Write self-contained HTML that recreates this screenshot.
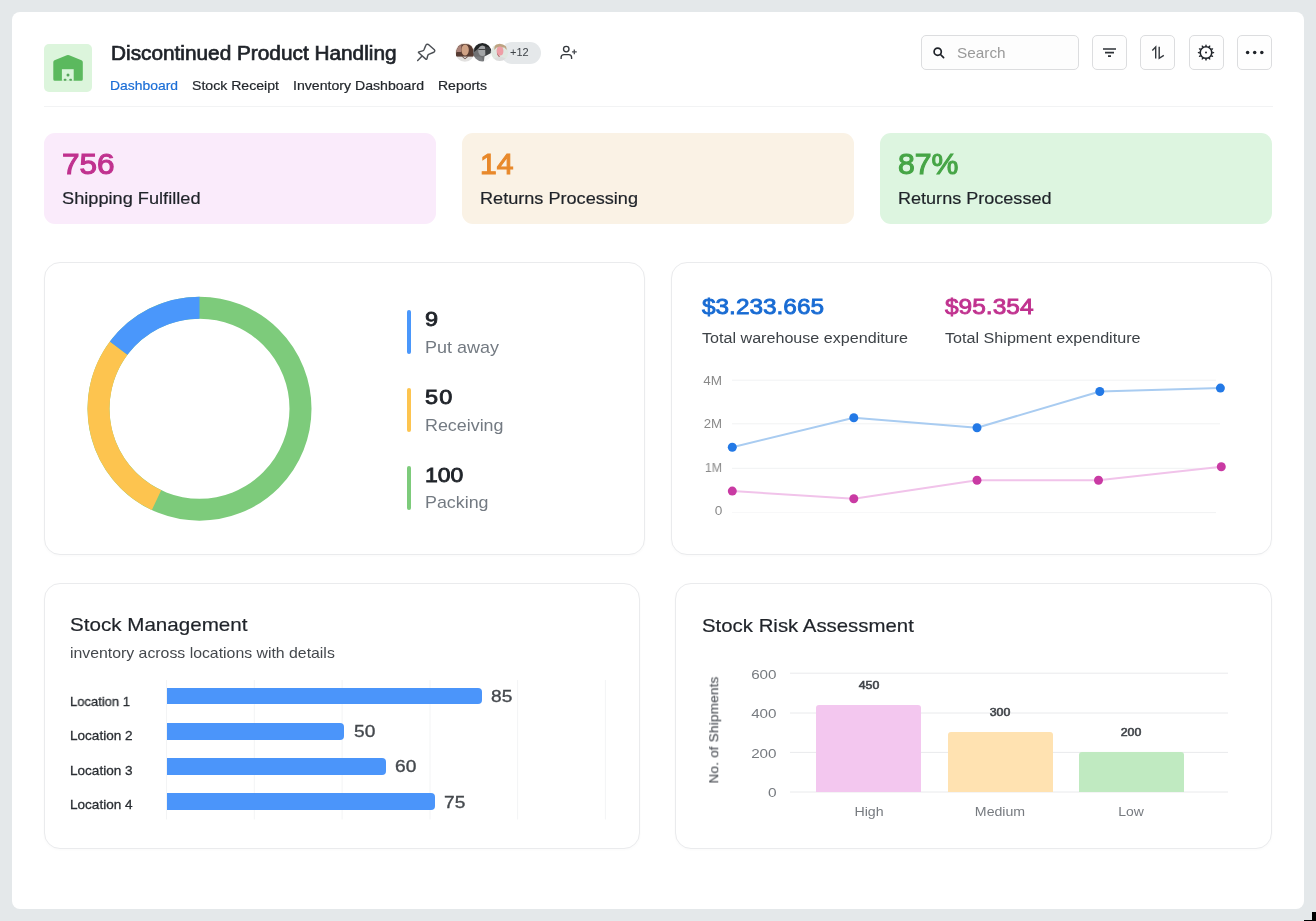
<!DOCTYPE html>
<html lang="en"><head><meta charset="utf-8"><title>Discontinued Product Handling</title>
<style>
*{box-sizing:border-box;margin:0;padding:0}
html,body{width:1316px;height:921px;overflow:hidden}
body{position:relative;background:#e4e8ea;font-family:"Liberation Sans",sans-serif;}
.abs{position:absolute}
.t{position:absolute;white-space:nowrap;line-height:1;font-family:"Liberation Sans",sans-serif;will-change:transform;}
.card{position:absolute;left:12px;top:12px;width:1292px;height:897px;background:#fff;border-radius:8px}
.hr{position:absolute;left:44px;top:105.5px;width:1228.5px;height:1px;background:#f2f3f4}
.logo{position:absolute;left:44px;top:44px;width:48px;height:48px;border-radius:5px;background:#dcf5dc}
.kpi{position:absolute;top:133px;width:392px;height:90.6px;border-radius:11px}
.panel{position:absolute;border:1px solid #eaebed;border-radius:16px;background:#fff;box-shadow:0 1px 3px rgba(0,0,0,0.025)}
.btn{position:absolute;top:35px;width:35px;height:35px;border:1px solid #dcdddf;border-radius:5px;background:#fefefe}
.search{position:absolute;left:921px;top:35px;width:158px;height:35px;border:1px solid #dcdddf;border-radius:5px;background:#fdfdfd}
.lg{position:absolute;left:407.2px;width:4px;height:44px;border-radius:2px}
.hb{position:absolute;left:166.5px;height:16.9px;background:#4b95fa;border-radius:0 4px 4px 0}
.vb{position:absolute;border-radius:3px 3px 0 0}
svg{position:absolute;overflow:visible}

</style></head><body>
<div class="card"></div>
<div class="abs" style="left:1312px;top:912px;width:4px;height:9px;background:#000"></div>
<div class="abs" style="left:1304px;top:920px;width:12px;height:1px;background:#000"></div>

<!-- header -->
<div class="logo"></div>
<svg style="left:44px;top:44px" width="48" height="48" viewBox="0 0 48 48">
  <path d="M9.3 18.2 Q9.3 16.8 10.5 16.2 L22.8 11.3 Q24 10.8 25.2 11.3 L37.5 16.2 Q38.8 16.8 38.8 18.2 L38.8 35.2 Q38.8 36.7 37.3 36.7 L10.8 36.7 Q9.3 36.7 9.3 35.2 Z" fill="#5bb95e"/>
  <rect x="17.9" y="25.2" width="11.8" height="11.6" fill="#d9f5da"/>
  <circle cx="24" cy="31.1" r="1.5" fill="#58a65c"/>
  <rect x="19.9" y="34.7" width="2.4" height="2.1" rx="0.6" fill="#58a65c"/>
  <rect x="25.5" y="34.7" width="2.4" height="2.1" rx="0.6" fill="#58a65c"/>
</svg>

<!-- search & buttons -->
<div class="search"></div>
<div class="btn" style="left:1092px"></div>
<div class="btn" style="left:1140.2px"></div>
<div class="btn" style="left:1188.8px"></div>
<div class="btn" style="left:1236.6px"></div>

<svg style="left:0;top:0" width="1316" height="110" viewBox="0 0 1316 110">
  <!-- pin -->
  <g fill="none" stroke="#4b4f54" stroke-width="1.45" stroke-linejoin="round" stroke-linecap="round">
    <path d="M426.5 44.5 Q427.6 43.9 428.7 44.7 L434.4 49.7 Q435.2 50.7 434.4 51.7 Q433.9 52.2 433.2 52.5 L428.7 54.4 Q427.8 54.9 427.6 56 L427 58.6 Q426.7 59.8 425.8 59.1 L418.7 52.8 Q418.1 52.2 419 51.9 L422.6 50.9 Q423.6 50.6 424.1 49.5 L425.7 45.6 Q426 44.8 426.5 44.5 Z"/>
    <path d="M421.6 56.5 L417.7 60.6"/>
  </g>
  <!-- add user -->
  <g fill="none" stroke="#34383d" stroke-width="1.35" stroke-linecap="butt">
    <circle cx="566.25" cy="49.1" r="2.75"/>
    <path d="M561.1 59 V57.4 Q561.1 54.55 564 54.55 H568.7 Q571.6 54.55 571.6 57.4 V59"/>
    <path d="M574.3 49.4 V54.3 M571.95 51.85 H576.75" stroke="#4b4f54"/>
  </g>
  <!-- search icon -->
  <g fill="none" stroke="#1f2329" stroke-width="1.7" stroke-linecap="round">
    <circle cx="937.7" cy="51.7" r="3.6"/><path d="M940.5 54.5 L943.6 57.6"/>
  </g>
  <!-- filter -->
  <g fill="none" stroke="#2e3237" stroke-width="1.7">
    <path d="M1103 49 H1116 M1105 52.6 H1114 M1108 56.2 H1111"/>
  </g>
  <!-- sort -->
  <g fill="none" stroke="#33373c" stroke-width="1.4" stroke-linejoin="miter">
    <path d="M1152.3 50.4 L1155.7 47 V58.5"/>
    <path d="M1159.2 46.8 V58.3 L1163.8 55.4"/>
  </g>
  <!-- gear -->
  <circle cx="1206.0" cy="52.6" r="5.75" fill="none" stroke="#1f2329" stroke-width="1.5"/>
  <path d="M1204.96 46.39 L1205.66 44.41 L1206.34 44.41 L1207.04 46.39 Z M1208.21 46.70 L1209.80 45.33 L1210.39 45.67 L1210.01 47.74 Z M1210.86 48.59 L1212.93 48.21 L1213.27 48.80 L1211.90 50.39 Z M1212.21 51.56 L1214.19 52.26 L1214.19 52.94 L1212.21 53.64 Z M1211.90 54.81 L1213.27 56.40 L1212.93 56.99 L1210.86 56.61 Z M1210.01 57.46 L1210.39 59.53 L1209.80 59.87 L1208.21 58.50 Z M1207.04 58.81 L1206.34 60.79 L1205.66 60.79 L1204.96 58.81 Z M1203.79 58.50 L1202.20 59.87 L1201.61 59.53 L1201.99 57.46 Z M1201.14 56.61 L1199.07 56.99 L1198.73 56.40 L1200.10 54.81 Z M1199.79 53.64 L1197.81 52.94 L1197.81 52.26 L1199.79 51.56 Z M1200.10 50.39 L1198.73 48.80 L1199.07 48.21 L1201.14 48.59 Z M1201.99 47.74 L1201.61 45.67 L1202.20 45.33 L1203.79 46.70 Z" fill="#1f2329"/>
  <circle cx="1206.0" cy="52.6" r="1" fill="#1f2329"/>
  <!-- dots -->
  <g fill="#1f2329"><circle cx="1247.6" cy="52.6" r="1.75"/><circle cx="1254.7" cy="52.6" r="1.75"/><circle cx="1261.8" cy="52.6" r="1.75"/></g>
</svg>

<!-- avatars -->
<div class="abs" style="left:501px;top:42px;width:39.5px;height:21.5px;border-radius:11px;background:#e5e8ea"></div>
<svg style="left:455px;top:42px" width="54" height="21" viewBox="455 42 54 21">
  <defs>
    <clipPath id="c1"><circle cx="464.9" cy="52.2" r="9.5"/></clipPath>
    <clipPath id="c2"><circle cx="482.3" cy="52.3" r="9.2"/></clipPath>
    <clipPath id="c3"><circle cx="499.7" cy="52.3" r="8.6"/></clipPath>
    <filter id="bl" x="-10%" y="-10%" width="120%" height="120%"><feGaussianBlur stdDeviation="0.45"/></filter>
  </defs>
  <g clip-path="url(#c1)"><g filter="url(#bl)">
    <rect x="454" y="41" width="22" height="23" fill="#eee3da"/>
    <path d="M456 60 Q455 47 461 44.6 Q465 43.4 469 44.6 Q475 47 474 60 Z" fill="#573a30"/>
    <path d="M456.5 52 Q457 46 461.5 44.8 L461 52 Z" fill="#a98178"/>
    <rect x="454" y="56.6" width="22" height="8" fill="#e2e1e0"/>
    <ellipse cx="465.1" cy="50" rx="3.7" ry="5.5" fill="#cfa285"/>
    <path d="M461.8 55.8 L465 58.2 L468.3 55.8 L468.2 56.8 L465 59.3 L461.9 56.8 Z" fill="#6b5248"/>
  </g></g>
  <g clip-path="url(#c2)"><g filter="url(#bl)">
    <rect x="472" y="41" width="21" height="23" fill="#6f7173"/>
    <path d="M474 52 Q474 43 482.5 43 Q491 43 491.5 52 L488 47.5 L479 48 Z" fill="#242527"/>
    <ellipse cx="482.4" cy="50.8" rx="4.2" ry="5.2" fill="#a2a4a6"/>
    <path d="M485 46.5 L490.5 48 L490 55.5 L485.5 56.5 Z" fill="#3d3f42"/>
    <path d="M478.5 49.5 H486" stroke="#444" stroke-width="1"/>
    <path d="M474 58 Q478 55.5 482 57.5 L483.5 63 L474 63 Z" fill="#7d7f82"/>
    <path d="M484.5 56.5 L492 52.5 L492 64 L483.5 64 Z" fill="#f4f4f4"/>
  </g></g>
  <g clip-path="url(#c3)"><g filter="url(#bl)">
    <rect x="490" y="41" width="20" height="23" fill="#e0e7e0"/>
    <path d="M494.3 50 Q494 42.8 500.5 42.8 Q507 43 506.6 50 L504.5 47.6 L496.6 47.6 Z" fill="#bda382"/>
    <ellipse cx="500" cy="51" rx="3.4" ry="4.6" fill="#ee9ea6"/>
    <path d="M497.2 52.5 Q498 56 500.2 56.6 L499 57 Q496.8 55.5 497.2 52.5 Z" fill="#a8575c"/>
    <path d="M492.5 64 Q493 56.8 500 56.8 Q507 56.8 507.5 64 Z" fill="#dcdcdb"/>
  </g></g>
</svg>

<div class="hr"></div>

<!-- KPI -->
<div class="kpi" style="left:44px;background:#faebfb"></div>
<div class="kpi" style="left:462px;background:#faf2e5"></div>
<div class="kpi" style="left:880px;background:#ddf5e0"></div>

<!-- panels -->
<div class="panel" style="left:44.2px;top:262px;width:600.8px;height:293.4px"></div>
<div class="panel" style="left:670.9px;top:262px;width:601px;height:293.4px"></div>
<div class="panel" style="left:44.2px;top:582.8px;width:595.4px;height:266.6px"></div>
<div class="panel" style="left:675.3px;top:582.8px;width:596.6px;height:266.6px"></div>

<!-- donut -->
<svg style="left:0;top:0" width="1316" height="921" viewBox="0 0 1316 921">
  <g fill="none" stroke-width="22" transform="translate(199.5 408.7)">
    <circle r="101" stroke="#7dcb7b"/>
    <path stroke="#fdc44f" d="M-43.00 91.39 A101 101 0 0 1 -80.87 -60.50"/>
    <path stroke="#4a97fb" d="M-80.87 -60.50 A101 101 0 0 1 0 -101"/>
  </g>
</svg>
<div class="lg" style="top:310px;background:#4a97fb"></div>
<div class="lg" style="top:388px;background:#fdc44f"></div>
<div class="lg" style="top:466px;background:#7dcb7b"></div>

<!-- line chart -->
<svg style="left:0;top:0" width="1316" height="921" viewBox="0 0 1316 921">
  <g stroke="#f1f2f3" stroke-width="1">
    <path d="M732 380.2 H1216 M732 423.8 H1220 M732 468.3 H1216 M900 512.6 H1216"/>
    <path d="M732 512.6 H900" stroke="#f8f8f9"/>
  </g>
  <polyline fill="none" stroke="#a9ccf1" stroke-width="2" stroke-linejoin="round" points="732.3,447.2 853.8,417.7 977,427.7 1099.8,391.5 1220.4,388.1"/>
  <polyline fill="none" stroke="#f1c3ea" stroke-width="2" stroke-linejoin="round" points="732.3,491.1 853.8,498.7 977,480.2 1098.5,480.2 1221.3,466.8"/>
  <g fill="#2379e6">
    <circle cx="732.3" cy="447.2" r="4.5"/><circle cx="853.8" cy="417.7" r="4.5"/><circle cx="977" cy="427.7" r="4.5"/><circle cx="1099.8" cy="391.5" r="4.5"/><circle cx="1220.4" cy="388.1" r="4.5"/>
  </g>
  <g fill="#c93aa3">
    <circle cx="732.3" cy="491.1" r="4.5"/><circle cx="853.8" cy="498.7" r="4.5"/><circle cx="977" cy="480.2" r="4.5"/><circle cx="1098.5" cy="480.2" r="4.5"/><circle cx="1221.3" cy="466.8" r="4.5"/>
  </g>
</svg>

<!-- stock management bars -->
<svg style="left:0;top:0" width="1316" height="921" viewBox="0 0 1316 921">
  <path stroke="#f3f4f5" stroke-width="1" d="M166.5 680 V819.5 M254.3 680 V819.5 M342.1 680 V819.5 M430 680 V819.5 M517.6 680 V819.5 M605.4 680 V819.5"/>
</svg>
<div class="hb" style="top:687.6px;width:315.8px"></div>
<div class="hb" style="top:722.8px;width:177.4px"></div>
<div class="hb" style="top:758px;width:219.6px"></div>
<div class="hb" style="top:793px;width:268.6px"></div>

<!-- risk chart -->
<svg style="left:0;top:0" width="1316" height="921" viewBox="0 0 1316 921">
  <path stroke="#e9eaec" stroke-width="1" d="M790 673.2 H1228 M790 713 H1228 M790 752.4 H1228 M790 792 H1228"/>
</svg>
<div class="vb" style="left:816px;top:705px;width:105px;height:87px;background:#f3c7ef"></div>
<div class="vb" style="left:948px;top:732.2px;width:104.5px;height:59.8px;background:#ffe2b1"></div>
<div class="vb" style="left:1079px;top:751.9px;width:105px;height:40.1px;background:#c0eac1"></div>
<div class="t" style="left:713.6px;top:730.2px;font-size:13.5px;color:#4d5157;-webkit-text-stroke:0.15px #4d5157;transform:translate(-50%,-50%) rotate(-90deg);letter-spacing:0.22px">No. of Shipments</div>

<div class="t" id="t0" style="top:43.27px;font-size:20px;font-weight:400;color:#1f2329;left:110.50px;transform-origin:0 50%;transform:scaleX(1.0397);-webkit-text-stroke:0.7px #1f2329;">Discontinued Product Handling</div>
<div class="t" id="t1" style="top:79.04px;font-size:13.3px;font-weight:400;color:#1a6dd6;left:110.00px;transform-origin:0 50%;transform:scaleX(1.0451);-webkit-text-stroke:0.2px #1a6dd6;">Dashboard</div>
<div class="t" id="t2" style="top:79.04px;font-size:13.3px;font-weight:400;color:#23272c;left:192.00px;transform-origin:0 50%;transform:scaleX(1.0604);-webkit-text-stroke:0.2px #23272c;">Stock Receipt</div>
<div class="t" id="t3" style="top:79.04px;font-size:13.3px;font-weight:400;color:#23272c;left:293.00px;transform-origin:0 50%;transform:scaleX(1.0611);-webkit-text-stroke:0.2px #23272c;">Inventory Dashboard</div>
<div class="t" id="t4" style="top:79.04px;font-size:13.3px;font-weight:400;color:#23272c;left:438.00px;transform-origin:0 50%;transform:scaleX(1.0523);-webkit-text-stroke:0.2px #23272c;">Reports</div>
<div class="t" id="t5" style="top:46.69px;font-size:11px;font-weight:400;color:#3d4247;left:510.40px;transform-origin:0 50%;transform:scaleX(0.9854);">+12</div>
<div class="t" id="t6" style="top:45.00px;font-size:15px;font-weight:400;color:#9a9a9a;left:956.60px;transform-origin:0 50%;transform:scaleX(1.0225);">Search</div>
<div class="t" id="t7" style="top:149.24px;font-size:29.6px;font-weight:400;color:#c0328f;left:62.20px;transform-origin:0 50%;transform:scaleX(1.0650);-webkit-text-stroke:1.1px #c0328f;">756</div>
<div class="t" id="t8" style="top:189.61px;font-size:17px;font-weight:400;color:#1f2329;left:62.00px;transform-origin:0 50%;transform:scaleX(1.0698);-webkit-text-stroke:0.2px #1f2329;">Shipping Fulfilled</div>
<div class="t" id="t9" style="top:149.24px;font-size:29.6px;font-weight:400;color:#e8892b;left:480.00px;transform-origin:0 50%;transform:scaleX(1.0176);-webkit-text-stroke:1.1px #e8892b;">14</div>
<div class="t" id="t10" style="top:189.61px;font-size:17px;font-weight:400;color:#1f2329;left:480.00px;transform-origin:0 50%;transform:scaleX(1.0651);-webkit-text-stroke:0.2px #1f2329;">Returns Processing</div>
<div class="t" id="t11" style="top:149.24px;font-size:29.6px;font-weight:400;color:#46a546;left:898.00px;transform-origin:0 50%;transform:scaleX(1.0214);-webkit-text-stroke:1.1px #46a546;">87%</div>
<div class="t" id="t12" style="top:189.61px;font-size:17px;font-weight:400;color:#1f2329;left:898.00px;transform-origin:0 50%;transform:scaleX(1.0617);-webkit-text-stroke:0.2px #1f2329;">Returns Processed</div>
<div class="t" id="t13" style="top:310.41px;font-size:19.6px;font-weight:400;color:#1f2329;letter-spacing:0.177px;left:425.30px;transform-origin:0 50%;transform:scaleX(1.2000);-webkit-text-stroke:0.8px #1f2329;">9</div>
<div class="t" id="t14" style="top:338.91px;font-size:17px;font-weight:400;color:#737a82;left:425.00px;transform-origin:0 50%;transform:scaleX(1.0581);">Put away</div>
<div class="t" id="t15" style="top:388.21px;font-size:19.6px;font-weight:400;color:#1f2329;letter-spacing:0.953px;left:425.30px;transform-origin:0 50%;transform:scaleX(1.2000);-webkit-text-stroke:0.8px #1f2329;">50</div>
<div class="t" id="t16" style="top:416.91px;font-size:17px;font-weight:400;color:#737a82;left:425.00px;transform-origin:0 50%;transform:scaleX(1.0515);">Receiving</div>
<div class="t" id="t17" style="top:465.81px;font-size:19.6px;font-weight:400;color:#1f2329;left:425.30px;transform-origin:0 50%;transform:scaleX(1.1711);-webkit-text-stroke:0.8px #1f2329;">100</div>
<div class="t" id="t18" style="top:494.41px;font-size:17px;font-weight:400;color:#737a82;left:425.00px;transform-origin:0 50%;transform:scaleX(1.0499);">Packing</div>
<div class="t" id="t19" style="top:295.68px;font-size:22px;font-weight:400;color:#186bd3;left:702.00px;transform-origin:0 50%;transform:scaleX(1.1080);-webkit-text-stroke:0.85px #186bd3;">$3.233.665</div>
<div class="t" id="t20" style="top:330.48px;font-size:15.5px;font-weight:400;color:#3d4247;left:701.80px;transform-origin:0 50%;transform:scaleX(1.0394);">Total warehouse expenditure</div>
<div class="t" id="t21" style="top:295.68px;font-size:22px;font-weight:400;color:#c0328f;left:945.00px;transform-origin:0 50%;transform:scaleX(1.1128);-webkit-text-stroke:0.85px #c0328f;">$95.354</div>
<div class="t" id="t22" style="top:330.48px;font-size:15.5px;font-weight:400;color:#3d4247;left:944.80px;transform-origin:0 50%;transform:scaleX(1.0408);">Total Shipment expenditure</div>
<div class="t" id="t23" style="top:374.00px;font-size:13px;font-weight:400;color:#8a8a8a;right:594.00px;transform-origin:100% 50%;transform:scaleX(1.0408);">4M</div>
<div class="t" id="t24" style="top:417.30px;font-size:13px;font-weight:400;color:#8a8a8a;right:594.00px;transform-origin:100% 50%;transform:scaleX(1.0187);">2M</div>
<div class="t" id="t25" style="top:461.00px;font-size:13px;font-weight:400;color:#8a8a8a;right:594.00px;transform-origin:100% 50%;transform:scaleX(0.9522);">1M</div>
<div class="t" id="t26" style="top:504.00px;font-size:13px;font-weight:400;color:#8a8a8a;right:594.00px;transform-origin:100% 50%;transform:scaleX(1.0505);">0</div>
<div class="t" id="t27" style="top:614.72px;font-size:19px;font-weight:400;color:#1f2329;left:69.70px;transform-origin:0 50%;transform:scaleX(1.0843);-webkit-text-stroke:0.2px #1f2329;">Stock Management</div>
<div class="t" id="t28" style="top:644.50px;font-size:15px;font-weight:400;color:#44484d;left:69.80px;transform-origin:0 50%;transform:scaleX(1.0552);">inventory across locations with details</div>
<div class="t" id="t29" style="top:694.57px;font-size:13.5px;font-weight:400;color:#2a2e33;left:70.30px;transform-origin:0 50%;transform:scaleX(0.9629);-webkit-text-stroke:0.3px #2a2e33;">Location 1</div>
<div class="t" id="t30" style="top:729.07px;font-size:13.5px;font-weight:400;color:#2a2e33;left:70.30px;transform-origin:0 50%;transform:scaleX(1.0046);-webkit-text-stroke:0.3px #2a2e33;">Location 2</div>
<div class="t" id="t31" style="top:763.57px;font-size:13.5px;font-weight:400;color:#2a2e33;left:70.30px;transform-origin:0 50%;transform:scaleX(1.0046);-webkit-text-stroke:0.3px #2a2e33;">Location 3</div>
<div class="t" id="t32" style="top:798.07px;font-size:13.5px;font-weight:400;color:#2a2e33;left:70.30px;transform-origin:0 50%;transform:scaleX(1.0046);-webkit-text-stroke:0.3px #2a2e33;">Location 4</div>
<div class="t" id="t33" style="top:687.81px;font-size:17px;font-weight:400;color:#44484d;left:491.40px;transform-origin:0 50%;transform:scaleX(1.1257);-webkit-text-stroke:0.35px #44484d;">85</div>
<div class="t" id="t34" style="top:723.11px;font-size:17px;font-weight:400;color:#44484d;left:353.50px;transform-origin:0 50%;transform:scaleX(1.1257);-webkit-text-stroke:0.35px #44484d;">50</div>
<div class="t" id="t35" style="top:758.41px;font-size:17px;font-weight:400;color:#44484d;left:395.30px;transform-origin:0 50%;transform:scaleX(1.1257);-webkit-text-stroke:0.35px #44484d;">60</div>
<div class="t" id="t36" style="top:793.61px;font-size:17px;font-weight:400;color:#44484d;left:444.30px;transform-origin:0 50%;transform:scaleX(1.1257);-webkit-text-stroke:0.35px #44484d;">75</div>
<div class="t" id="t37" style="top:616.42px;font-size:19px;font-weight:400;color:#1f2329;left:702.20px;transform-origin:0 50%;transform:scaleX(1.0727);-webkit-text-stroke:0.2px #1f2329;">Stock Risk Assessment</div>
<div class="t" id="t38" style="top:667.87px;font-size:13.5px;font-weight:400;color:#777b80;right:539.50px;transform-origin:100% 50%;transform:scaleX(1.1273);">600</div>
<div class="t" id="t39" style="top:707.37px;font-size:13.5px;font-weight:400;color:#777b80;right:539.50px;transform-origin:100% 50%;transform:scaleX(1.1273);">400</div>
<div class="t" id="t40" style="top:747.17px;font-size:13.5px;font-weight:400;color:#777b80;right:539.50px;transform-origin:100% 50%;transform:scaleX(1.1273);">200</div>
<div class="t" id="t41" style="top:786.07px;font-size:13.5px;font-weight:400;color:#777b80;right:539.50px;transform-origin:100% 50%;transform:scaleX(1.1443);">0</div>
<div class="t" id="t42" style="top:680.12px;font-size:11.2px;font-weight:400;color:#3f4348;left:868.50px;transform-origin:50% 50%;transform:translateX(-50%) scaleX(1.1033);-webkit-text-stroke:0.55px #3f4348;">450</div>
<div class="t" id="t43" style="top:707.02px;font-size:11.2px;font-weight:400;color:#3f4348;left:1000.00px;transform-origin:50% 50%;transform:translateX(-50%) scaleX(1.1033);-webkit-text-stroke:0.55px #3f4348;">300</div>
<div class="t" id="t44" style="top:727.02px;font-size:11.2px;font-weight:400;color:#3f4348;left:1131.30px;transform-origin:50% 50%;transform:translateX(-50%) scaleX(1.1033);-webkit-text-stroke:0.55px #3f4348;">200</div>
<div class="t" id="t45" style="top:804.87px;font-size:13.5px;font-weight:400;color:#777b80;left:868.50px;transform-origin:50% 50%;transform:translateX(-50%) scaleX(1.0517);">High</div>
<div class="t" id="t46" style="top:804.87px;font-size:13.5px;font-weight:400;color:#777b80;left:1000.00px;transform-origin:50% 50%;transform:translateX(-50%) scaleX(1.0476);">Medium</div>
<div class="t" id="t47" style="top:804.87px;font-size:13.5px;font-weight:400;color:#777b80;left:1131.00px;transform-origin:50% 50%;transform:translateX(-50%) scaleX(1.0337);">Low</div>
</body></html>
